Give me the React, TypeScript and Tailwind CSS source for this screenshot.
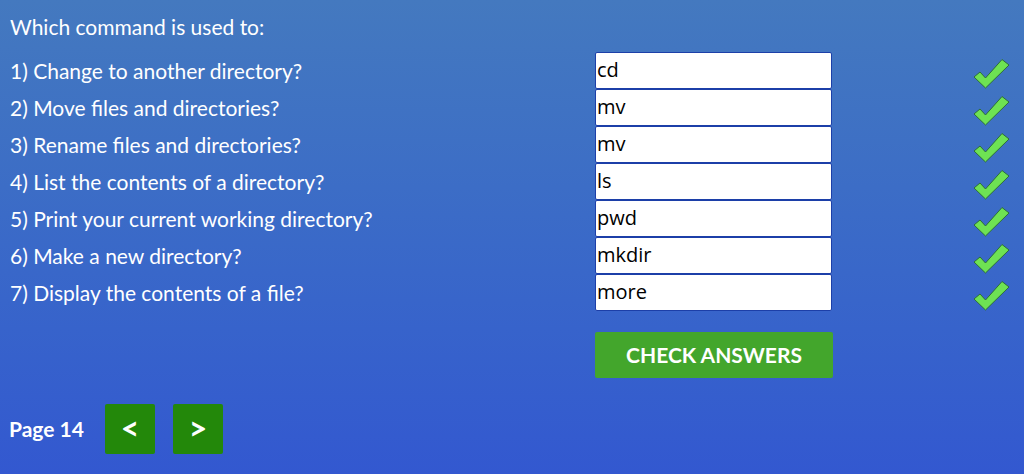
import React from 'react';

const questions = [
  { label: '1) Change to another directory?', answer: 'cd' },
  { label: '2) Move files and directories?', answer: 'mv' },
  { label: '3) Rename files and directories?', answer: 'mv' },
  { label: '4) List the contents of a directory?', answer: 'ls' },
  { label: '5) Print your current working directory?', answer: 'pwd' },
  { label: '6) Make a new directory?', answer: 'mkdir' },
  { label: '7) Display the contents of a file?', answer: 'more' },
];

const Tick = () => (
  <svg width="37" height="31" viewBox="0 0 37 31" className="block">
    <path
      d="M1 19 L7 14 L12.5 20 L29 1.5 L36 7 L12.5 30 Z"
      fill="#6ee253"
      stroke="#2d6e3a"
      strokeWidth="1"
      strokeLinejoin="round"
    />
  </svg>
);

export default function App() {
  return (
    <div
      className="w-[1024px] h-[474px] overflow-hidden bg-gradient-to-b from-[#4479bf] to-[#3358d0] text-white"
      style={{ fontFamily: 'Lato, "Liberation Sans", sans-serif' }}
    >
      <div className="pl-[10px] pt-[13px]">
        <div className="text-[21px] leading-[28px] h-[39px]">Which command is used to:</div>
        <div className="flex flex-col">
          {questions.map((q) => (
            <div key={q.label} className="flex items-center h-[37px]">
              <div className="w-[585px] text-[21px]">{q.label}</div>
              <input
                readOnly
                value={q.answer}
                className="w-[237px] h-[37px] bg-white border border-[#1c3fa8] rounded-[2px] px-[1px] pb-[2px] text-[20px] text-black outline-none"
                style={{ fontFamily: '"Open Sans", "Noto Sans", sans-serif' }}
              />
              <div className="ml-[141px] pt-[6px]">
                <Tick />
              </div>
            </div>
          ))}
        </div>
        <div className="pl-[585px] pt-[21px]">
          <button className="w-[238px] h-[46px] bg-[#43a62c] rounded-[2px] text-[21px] font-bold text-white">
            CHECK ANSWERS
          </button>
        </div>
      </div>
      <div className="flex items-center pl-[9px] pt-[26px]">
        <span className="text-[21px] font-bold w-[96px]">Page 14</span>
        <button className="w-[50px] h-[50px] bg-[#23880a] rounded-[2px] text-[32px] leading-none font-bold text-white pb-[3px]">
          &lt;
        </button>
        <button className="ml-[18px] w-[50px] h-[50px] bg-[#23880a] rounded-[2px] text-[32px] leading-none font-bold text-white pb-[3px]">
          &gt;
        </button>
      </div>
    </div>
  );
}
